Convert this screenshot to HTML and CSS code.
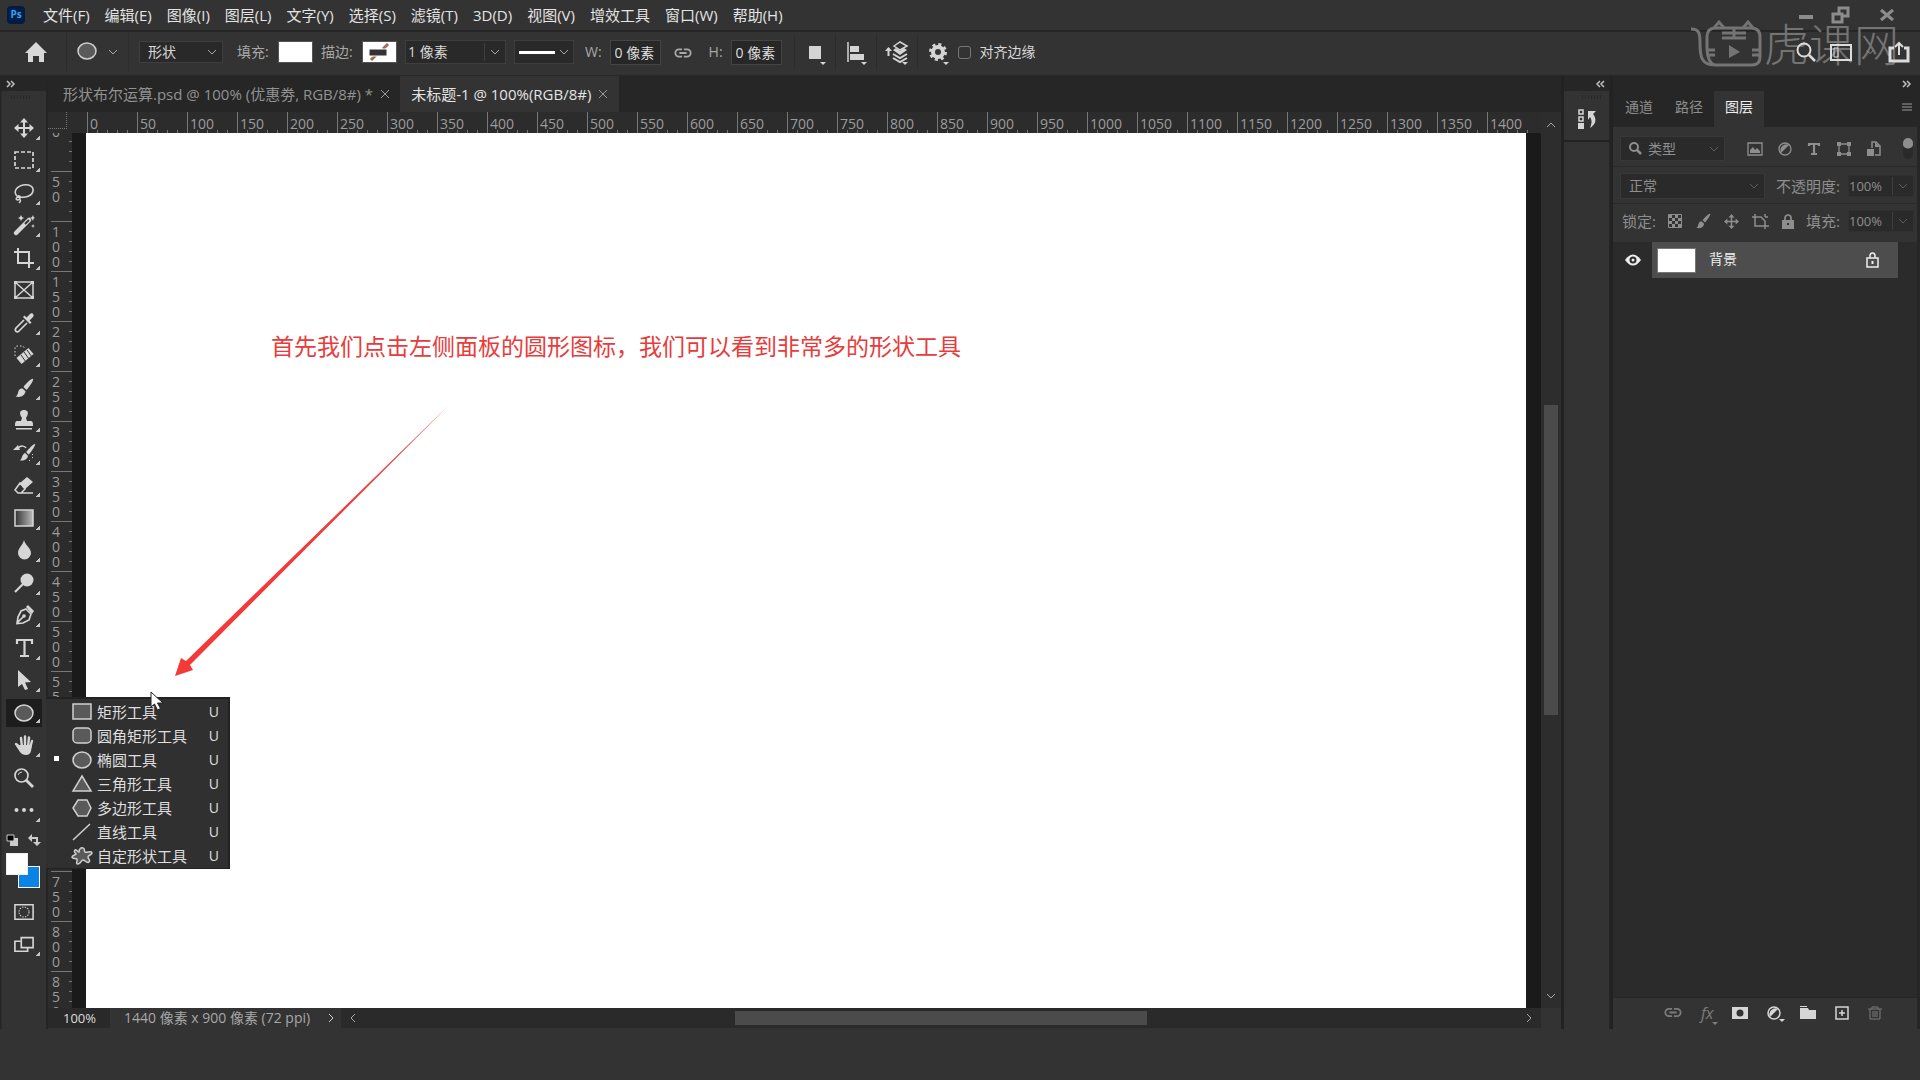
FILE: index.html
```html
<!DOCTYPE html>
<html lang="zh-CN">
<head>
<meta charset="utf-8">
<meta name="viewport" content="width=device-width, initial-scale=1">
<title>未标题-1</title>
<link rel="stylesheet" href="styles.css">
</head>
<body>
<svg class="sprite" aria-hidden="true">
  <symbol id="down" viewBox="0 0 10 6"><path d="M1 1l4 4 4-4" fill="none" stroke="currentColor"/></symbol>
  <symbol id="dbl-right" viewBox="0 0 10 8"><path d="M1 1l3 3-3 3M5 1l3 3-3 3" fill="none" stroke="currentColor" stroke-width="1.5"/></symbol>
  <symbol id="cross" viewBox="0 0 10 10"><path d="M1 1l8 8M9 1l-8 8" fill="none" stroke="currentColor"/></symbol>
  <symbol id="move" viewBox="0 0 20 20"><path d="M10 0l4 4.500h-3V9h4.500V6L20 10l-4.500 4v-3H11v4.500h3L10 20l-4-4.500h3V11H4.500v3L0 10l4.500-4v3H9V4.500H6z" fill="currentColor"/></symbol>
  <symbol id="brush" viewBox="0 0 20 20"><path d="M19 1c-1-1-6 3.500-9.500 8l3 3C16 8 20 2 19 1zM8.500 10.500l3 2.800c-.5 4-4.500 6.700-10 5.200 3-1 2-5 4-7 1-1 2-1.200 3-1z" fill="currentColor"/></symbol>
  <symbol id="link" viewBox="0 0 20 12"><path d="M9 2H5.500a4 4 0 0 0 0 8H9M11 2h3.500a4 4 0 0 1 0 8H11M6 6h8" fill="none" stroke="currentColor" stroke-width="2"/></symbol>
</svg>

<header class="menubar">
  <span class="logo">Ps</span>
  <nav class="menus">
    <button>文件(F)</button><button>编辑(E)</button><button>图像(I)</button><button>图层(L)</button><button>文字(Y)</button><button>选择(S)</button><button>滤镜(T)</button><button>3D(D)</button><button>视图(V)</button><button>增效工具</button><button>窗口(W)</button><button>帮助(H)</button>
  </nav>
  <div class="window-buttons">
    <button aria-label="最小化"><svg width="14" height="18"><path d="M0 11h14" stroke="currentColor" stroke-width="4"/></svg></button>
    <button aria-label="还原"><svg width="20" height="18"><path d="M2 8h9v8H2zM8 7V2h9v8h-6" fill="none" stroke="currentColor" stroke-width="3"/></svg></button>
    <button aria-label="关闭"><svg width="14" height="18"><path d="M1 4l12 10M13 4L1 14" stroke="currentColor" stroke-width="3"/></svg></button>
  </div>
</header>

<section class="options" aria-label="工具选项">
  <button class="home" aria-label="主页"><svg width="22" height="20"><path d="M11 0l11 11h-3v9h-5v-6H8v6H3v-9H0z" fill="currentColor"/></svg></button>
  <button class="preset" aria-label="工具预设"><svg width="20" height="20"><ellipse cx="10" cy="9" rx="9" ry="8" fill="#5a5a5a" stroke="#cfcfcf" stroke-width="1.500"/></svg><svg class="chev"><use href="#down"/></svg></button>
  <span class="drop mode"><select aria-label="模式"><option>形状</option></select><svg class="chev"><use href="#down"/></svg></span>
  <span class="caption fill">填充:</span>
  <button class="swatch" aria-label="填充颜色"></button>
  <span class="caption">描边:</span>
  <button class="swatch" aria-label="描边颜色"><svg width="32" height="20"><path d="M8 18L13 13M20 7L25 2" stroke="#a5695c" stroke-width="3"/><path d="M6 7h18v7H6z" fill="#333" stroke="#fff"/></svg></button>
  <span class="drop stroke"><input aria-label="描边宽度" value="1 像素"><svg class="chev"><use href="#down"/></svg></span>
  <button class="line-type" aria-label="描边类型"><i></i><svg class="chev"><use href="#down"/></svg></button>
  <label class="size wide">W: <input value="0 像素"></label>
  <svg class="chain"><use href="#link"/></svg>
  <label class="size">H: <input value="0 像素"></label>
  <div class="actions">
    <button class="has-menu" aria-label="路径操作"><svg width="14" height="14"><path d="M1 1h12v13H1z" fill="currentColor"/></svg></button>
    <button class="has-menu" aria-label="路径对齐"><svg width="18" height="20"><path d="M1 0v20" stroke="currentColor" stroke-width="1.500"/><path d="M3 4h9v6H3zM3 12h14v6H3z" fill="currentColor"/></svg></button>
    <button class="has-menu" aria-label="路径排列"><svg width="24" height="22"><path d="M3.500 15V7" stroke="currentColor" stroke-width="2"/><path d="M0 10l3.500-4L7 10z" fill="currentColor"/><path d="M9 5l6-4 7 4-7 4z" fill="none" stroke="currentColor" stroke-width="1.500"/><path d="M8 9l3-2 4 3 4-3 3 2-7 5z" fill="currentColor"/><path d="M8 13l7 4 7-4M8 17l7 4 7-4" fill="none" stroke="currentColor" stroke-width="2"/></svg></button>
    <button class="has-menu" aria-label="设置"><svg width="18" height="18"><circle cx="9" cy="9" r="5" fill="none" stroke="currentColor" stroke-width="4"/><circle cx="9" cy="9" r="7.500" fill="none" stroke="currentColor" stroke-width="3" stroke-dasharray="3 2.900"/></svg></button>
  </div>
  <label class="check"><input type="checkbox">对齐边缘</label>
  <div class="app-actions">
    <button aria-label="搜索"><svg width="20" height="20"><circle cx="8" cy="8" r="6.500" fill="none" stroke="currentColor" stroke-width="2"/><path d="M13 13l6 6" stroke="currentColor" stroke-width="2.500"/></svg></button>
    <button aria-label="工作区"><svg width="22" height="18"><path d="M1 2h20v15H1z" fill="none" stroke="currentColor" stroke-width="2"/><path d="M4 5h4v9H4z" fill="none" stroke="currentColor"/></svg></button>
    <svg class="chev small"><use href="#down"/></svg>
    <button aria-label="共享"><svg width="22" height="22"><path d="M6 7H2v13h18V7h-4" fill="none" stroke="currentColor" stroke-width="3"/><path d="M11 14V3M7 6l4-4 4 4" fill="none" stroke="currentColor" stroke-width="2"/></svg></button>
  </div>
</section>

<div class="watermark">
  <svg width="70" height="48" fill="none" stroke="currentColor" stroke-width="3"><path d="M0 9c8 0 9 4 9 14 0 13 1 22 15 22h37q8 0 8-8V17q0-9-9-9H24q-8 0-8 9v11c0 9 3 17 9 17"/><path d="M23 8l5-6 5 6M52 8l5-6 5 6M31 13h24M34 18h18M31 18h24M43 8v10M16 30h8M16 35h8M61 30h8M61 35h8"/><path d="M38 25l11 7-11 6z" fill="currentColor" stroke="none"/></svg><span>虎课网</span>
</div>

<main class="workspace">
  <aside class="toolbox">
    <div class="collapse"><svg width="10" height="8"><use href="#dbl-right"/></svg></div>
    <div class="toolpanel">
      <div class="grip"></div>
      <div class="tools">
        <button class="tool" aria-label="移动"><svg><use href="#move"/></svg></button>
        <button class="tool" aria-label="选框"><svg viewBox="0 0 20 20"><path d="M1 2h18v16H1z" fill="none" stroke="currentColor" stroke-width="1.700" stroke-dasharray="4 2"/></svg></button>
        <button class="tool" aria-label="套索"><svg viewBox="0 0 20 20"><path d="M4 14C-1 10 1 4 9 2c7-1 11 2 10 6-1 5-7 7-14 6-3 0-4 3-1 3 3-1 3-5 0-4M5 16c2 1 2 2 0 4" fill="none" stroke="currentColor" stroke-width="1.500"/></svg></button>
        <button class="tool" aria-label="魔棒"><svg viewBox="0 0 20 20"><path d="M2 18L15 5" stroke="currentColor" stroke-width="4.500" stroke-linecap="round"/><path d="M11 9l4-4" stroke="#333" stroke-width="2"/><path d="M7 0l1 2 2 1-2 1-1 2-1-2-2-1 2-1zM19 0l.6 2L21 3l-1.400.6L19 6l-1-2-2-1 2-1zM19 9l.6 1.400L21 11l-1.400.6L19 13l-.6-1.400L17 11l1.400-.6z" fill="currentColor"/></svg></button>
        <button class="tool" aria-label="裁剪"><svg viewBox="0 0 20 20"><path d="M4 0v15h16M0 4h15v16" fill="none" stroke="currentColor" stroke-width="2"/></svg></button>
        <button class="tool plain" aria-label="图框"><svg viewBox="0 0 20 20"><path d="M1 2h18v16H1zM1 2l18 16M19 2L1 18" fill="none" stroke="currentColor" stroke-width="1.500"/><path d="M0 1h3v3H0zM17 1h3v3h-3zM0 16h3v3H0zM17 16h3v3h-3z" fill="currentColor"/></svg></button>
        <button class="tool" aria-label="吸管"><svg viewBox="0 0 20 20"><path d="M10 7L2 15c-2 3 1 5 3 3l8-8" fill="none" stroke="currentColor" stroke-width="1.700"/><path d="M9 4l7 7 1.500-1.500-2-2L19 4c2-2-1-5-3-3l-3.500 3.500-2-2z" fill="currentColor"/></svg></button>
        <button class="tool" aria-label="修复"><svg viewBox="0 0 20 20"><path d="M5 16L17 6" stroke="currentColor" stroke-width="8"/><path d="M7 10l5 7M10 7l5 7M13 5l5 7" stroke="#333"/><path d="M1 11V3q0-2 3-2h5l2 3" fill="none" stroke="currentColor" stroke-dasharray="1.500 2"/></svg></button>
        <button class="tool" aria-label="画笔"><svg><use href="#brush"/></svg></button>
        <button class="tool" aria-label="图章"><svg viewBox="0 0 20 20"><path d="M7 11l1-3C4 2 7 0 10 0s6 2 2 8l1 3h4q2 0 2 4v1H1v-1q0-4 2-4zM2 18h16v1.500H2z" fill="currentColor"/></svg></button>
        <button class="tool" aria-label="历史画笔"><svg viewBox="0 0 20 20"><g transform="translate(4 1) scale(.9)"><path d="M19 0c-1-1-7 5-10 9l3 3c3-4 8-11 7-12zM8 10l3 3c0 4-5 6-9 5 3-1 2-7 6-8z" fill="currentColor"/></g><path d="M4 5c3-3 7-2 8 0" fill="none" stroke="currentColor" stroke-width="1.500"/><path d="M-1 7l5-5 2 5zM18 11h1v1h-1zM18 14h1v1h-1zM15 17h1v1h-1z" fill="currentColor"/></svg></button>
        <button class="tool" aria-label="橡皮擦"><svg viewBox="0 0 20 20"><path d="M6 8l7-6 6 5-8 7z" fill="currentColor"/><path d="M6 8l5 6-4 4H4l-3-3zM5 18h14" fill="none" stroke="currentColor" stroke-width="1.500"/></svg></button>
        <button class="tool" aria-label="渐变"><svg viewBox="0 0 20 20"><defs><linearGradient id="ramp"><stop stop-color="#333"/><stop offset="1" stop-color="#bbb"/></linearGradient></defs><path d="M1 2h18v16H1z" fill="url(#ramp)" stroke="currentColor" stroke-width="1.500"/></svg></button>
        <button class="tool" aria-label="模糊"><svg viewBox="0 0 20 20"><path d="M10 0c1 5 7 8 7 13a6.500 6.500 0 0 1-13 0C4 8 9 5 10 0z" fill="currentColor"/></svg></button>
        <button class="tool" aria-label="减淡"><svg viewBox="0 0 20 20"><circle cx="13" cy="7" r="6.500" fill="currentColor"/><path d="M9 11l-8 8" stroke="currentColor" stroke-width="2.200"/></svg></button>
        <button class="tool" aria-label="钢笔"><svg viewBox="0 0 20 20"><path d="M12 4l5 5-2 6-6 3-6 .500L4 12l3-6zM3 18l7-7" fill="none" stroke="currentColor" stroke-width="1.700"/><path d="M12 2l2-2 6 6-2 3z" fill="currentColor"/><circle cx="10" cy="11" r="1.800" fill="currentColor"/></svg></button>
        <button class="tool" aria-label="文字"><svg viewBox="0 0 20 20"><path d="M3 6V2h15v4M10.500 2v16M6 18h9" fill="none" stroke="currentColor" stroke-width="2.200"/></svg></button>
        <button class="tool" aria-label="路径选择"><svg viewBox="0 0 20 20"><path d="M4 0l13 12-6 .500 3 6.500-3 1-3-6-4 3z" fill="currentColor"/></svg></button>
        <button class="tool active" aria-label="椭圆"><svg viewBox="0 0 20 20"><ellipse cx="10" cy="10" rx="9" ry="8" fill="#5a5a5a" stroke="currentColor" stroke-width="1.500"/></svg></button>
        <button class="tool" aria-label="抓手"><svg viewBox="0 0 20 20"><path d="M2 9l5 4M8 12L7 3M11 11V1.500M14 12l1-9.500M16 13l2-7" stroke="currentColor" stroke-width="2.400" stroke-linecap="round"/><path d="M6 10h12l-1 6q-1 4-5 4T6 17L2 11z" fill="currentColor"/></svg></button>
        <button class="tool plain" aria-label="缩放"><svg viewBox="0 0 20 20"><circle cx="7.500" cy="7.500" r="6.500" fill="none" stroke="currentColor" stroke-width="1.700"/><path d="M12 12l7 7" stroke="currentColor" stroke-width="2.800"/><path d="M4 7q1-3 4-3" fill="none" stroke="currentColor"/></svg></button>
        <button class="tool" aria-label="更多"><svg viewBox="0 0 20 20"><circle cx="2.500" cy="10" r="2" fill="currentColor"/><circle cx="10" cy="10" r="2" fill="currentColor"/><circle cx="17.500" cy="10" r="2" fill="currentColor"/></svg></button>
      </div>
      <div class="color-mini">
        <svg width="12" height="12"><path d="M4 4h8v8H4z" fill="#ccc"/><path d="M1 1h7v6H1z" fill="#000" stroke="#ccc"/></svg>
        <svg width="12" height="12"><path d="M3 4h6v5" fill="none" stroke="#ccc" stroke-width="2"/><path d="M0 4l4-4v8zM9 12L5 8h8z" fill="#ccc"/></svg>
      </div>
      <div class="colors"><button class="back" aria-label="背景色"></button><button class="front" aria-label="前景色"></button></div>
      <button class="tool plain" aria-label="快速蒙版"><svg viewBox="0 0 22 18"><path d="M1 1h20v16H1z" fill="none" stroke="currentColor" stroke-width="1.700"/><circle cx="11" cy="9" r="5.500" fill="none" stroke="currentColor" stroke-width="1.200" stroke-dasharray="1.500 1.400"/></svg></button>
      <button class="tool" aria-label="屏幕模式"><svg viewBox="0 0 22 18"><path d="M7 6H1v11h14v-4M8 2h13v11H8z" fill="none" stroke="currentColor" stroke-width="1.800"/></svg></button>
    </div>
    <div class="flyout" role="menu">
      <button role="menuitem"><svg><path d="M1 2h18v15H1z"/></svg>矩形工具<kbd>U</kbd></button>
      <button role="menuitem"><svg><rect x="1" y="2" width="18" height="15" rx="4"/></svg>圆角矩形工具<kbd>U</kbd></button>
      <button role="menuitem" class="current"><svg><ellipse cx="10" cy="10" rx="9" ry="8"/></svg>椭圆工具<kbd>U</kbd></button>
      <button role="menuitem"><svg><path d="M10 2l9 15H1z"/></svg>三角形工具<kbd>U</kbd></button>
      <button role="menuitem"><svg><path d="M6 2h9l4 8-4 8H6l-5-8z"/></svg>多边形工具<kbd>U</kbd></button>
      <button role="menuitem"><svg><path d="M1 18L18 2"/></svg>直线工具<kbd>U</kbd></button>
      <button role="menuitem"><svg><path d="M7 6c0-3 2-5 4-4 2 0 1 3 2 4 2 1 7-2 7 1 0 2-4 2-4 4s3 3 1 5-4-2-6-2-2 4-5 4 0-4-1-5-5 0-5-2 4-2 4-3-3-2-1-4c1-1 3 2 4 2z"/></svg>自定形状工具<kbd>U</kbd></button>
    </div>
    <svg class="pointer" width="14" height="20"><path d="M1 1v15l3.500-3 3 6 3-1.500-3-5.500H13z" fill="#fff" stroke="#222"/></svg>
  </aside>

  <section class="document">
    <div class="tabs">
      <div class="tab"><a href="#psd">形状布尔运算.psd @ 100% (优惠劵, RGB/8#) *</a><button aria-label="关闭"><svg width="10" height="10"><use href="#cross"/></svg></button></div>
      <div class="tab selected"><a href="#canvas">未标题-1 @ 100%(RGB/8#)</a><button aria-label="关闭"><svg width="10" height="10"><use href="#cross"/></svg></button></div>
    </div>
    <div class="view">
      <div class="ruler-x">
        <i class="origin"></i>
        <div class="marks-x"><span>0</span><span>50</span><span>100</span><span>150</span><span>200</span><span>250</span><span>300</span><span>350</span><span>400</span><span>450</span><span>500</span><span>550</span><span>600</span><span>650</span><span>700</span><span>750</span><span>800</span><span>850</span><span>900</span><span>950</span><span>1000</span><span>1050</span><span>1100</span><span>1150</span><span>1200</span><span>1250</span><span>1300</span><span>1350</span><span>1400</span></div>
      </div>
      <div class="scroll-y"><svg class="chev up"><use href="#down"/></svg><div class="track"><i></i></div><svg class="chev"><use href="#down"/></svg></div>
      <div class="ruler-y"><div class="marks-y"><span>0</span><span>50</span><span>100</span><span>150</span><span>200</span><span>250</span><span>300</span><span>350</span><span>400</span><span>450</span><span>500</span><span>550</span><span>600</span><span>650</span><span>700</span><span>750</span><span>800</span><span>850</span></div></div>
      <div class="pasteboard">
        <div class="canvas" id="canvas">
          <p class="note">首先我们点击左侧面板的圆形图标，我们可以看到非常多的形状工具</p>
          <svg class="arrow" width="274" height="272"><path d="M0 271l6-18 5 3L273 1 15 260l3 5z" fill="#f33a38"/></svg>
        </div>
      </div>
    </div>
    <div class="status">
      <input class="zoom" aria-label="缩放比例" value="100%">
      <span class="info">1440 像素 x 900 像素 (72 ppi)</span>
      <svg class="chev right bright"><use href="#down"/></svg>
      <div class="scroll-x"><svg class="chev left"><use href="#down"/></svg><div class="track"><i></i></div><svg class="chev right"><use href="#down"/></svg></div>
    </div>
  </section>

  <aside class="strip">
    <div class="collapse end"><svg class="flip" width="10" height="8"><use href="#dbl-right"/></svg></div>
    <div class="strip-cell"><div class="grip"></div><button aria-label="历史记录"><svg width="20" height="22"><path d="M2 2h4v4H2zM2 9h4v4H2z" fill="none" stroke="currentColor" stroke-width="1.500"/><path d="M1 15h6v6H1z" fill="currentColor"/><path d="M11 3h8l-3 3c4 5 3 10-3 14 2-5 2-8 0-11l-2 3z" fill="currentColor"/></svg></button></div>
    <div class="strip-rest"></div>
  </aside>

  <aside class="panels">
    <div class="collapse end"><svg width="10" height="8"><use href="#dbl-right"/></svg></div>
    <div class="panel-tabs"><button>通道</button><button>路径</button><button class="selected">图层</button><svg class="burger" width="10" height="10"><path d="M0 1h10M0 4h10M0 7h10" stroke="currentColor" stroke-width="1"/></svg></div>
    <div class="row filter">
      <span class="drop kind"><svg width="13" height="13"><circle cx="5" cy="5" r="4" fill="none" stroke="currentColor" stroke-width="2"/><path d="M8 8l4 4" stroke="currentColor" stroke-width="2.500"/></svg><select aria-label="筛选"><option>类型</option></select><svg class="chev"><use href="#down"/></svg></span>
      <div class="filter-icons">
        <svg width="16" height="14"><path d="M1 1h14v12H1z" fill="none" stroke="currentColor" stroke-width="1.300"/><path d="M3 11V8l3-3 2 3 2-2 3 3v2z" fill="currentColor"/></svg>
        <svg width="14" height="14"><circle cx="7" cy="7" r="6" fill="none" stroke="currentColor" stroke-width="1.300"/><path d="M3 11a6 6 0 0 1 8-8z" fill="currentColor"/></svg>
        <svg width="14" height="14"><path d="M2 4V2h10v2M7 2v10M4 12h6" fill="none" stroke="currentColor" stroke-width="2.200"/></svg>
        <svg width="16" height="14"><path d="M3 2h10v10H3z" fill="none" stroke="currentColor" stroke-width="1.300"/><path d="M1 0h4v4H1zM11 0h4v4h-4zM1 10h4v4H1zM11 10h4v4h-4z" fill="currentColor"/></svg>
        <svg width="14" height="16"><path d="M5 7V1h4l4 4v9H8" fill="none" stroke="currentColor" stroke-width="1.500"/><path d="M8 1v5h5M0 8h7v7H0z" fill="currentColor"/></svg>
      </div>
      <i class="toggle"></i>
    </div>
    <div class="row blend">
      <span class="drop mode-blend"><select aria-label="混合模式"><option>正常</option></select><svg class="chev"><use href="#down"/></svg></span>
      <label for="opacity">不透明度:</label>
      <span class="drop percent"><input id="opacity" value="100%"><svg class="chev"><use href="#down"/></svg></span>
    </div>
    <div class="row locks">
      <span class="lock-label">锁定:</span>
      <div class="lock-icons">
        <svg width="14" height="14"><path d="M.5.5h13v13H.5z" fill="none" stroke="currentColor"/><path d="M1 1h3v3H1zM7 1h3v3H7zM4 4h3v3H4zM10 4h3v3h-3zM1 7h3v3H1zM7 7h3v3H7zM4 10h3v3H4zM10 10h3v3h-3z" fill="currentColor"/></svg>
        <svg width="16" height="16"><use href="#brush"/></svg>
        <svg width="15" height="15"><use href="#move"/></svg>
        <svg width="17" height="15"><path d="M0 3h9l4 4v8M3 0v12h14M13 3V0M13 3h3" fill="none" stroke="currentColor" stroke-width="1.500"/></svg>
        <svg width="12" height="15"><path d="M0 6h12v9H0z" fill="currentColor"/><path d="M3 6V4a3 3 0 0 1 6 0v2" fill="none" stroke="currentColor" stroke-width="1.700"/><path d="M5 9h2v2H5z" fill="#333"/></svg>
      </div>
      <label for="fill-pct">填充:</label>
      <span class="drop percent"><input id="fill-pct" value="100%"><svg class="chev"><use href="#down"/></svg></span>
    </div>
    <div class="layers">
      <div class="layer">
        <button class="eye" aria-label="可见性"><svg width="16" height="12"><path d="M0 6q8-11 16 0-8 11-16 0z" fill="currentColor"/><circle cx="8" cy="6" r="3.500" fill="#2b2b2b"/><circle cx="8" cy="6" r="1.500" fill="currentColor"/></svg></button>
        <div class="layer-body"><i class="thumb"></i><span>背景</span><svg width="14" height="16"><path d="M1 6h11v9H1zM4 6V4q0-3 2.500-3T9 4v2" fill="none" stroke="currentColor" stroke-width="1.500"/><path d="M5.500 9h2v3h-2z" fill="currentColor"/></svg></div>
      </div>
    </div>
    <div class="panel-foot">
      <button class="dim" aria-label="链接图层"><svg width="18" height="11"><use href="#link"/></svg></button>
      <button class="dim fx has-menu" aria-label="图层样式">fx</button>
      <button aria-label="蒙版"><svg width="16" height="12"><path d="M0 0h16v12H0z" fill="currentColor"/><circle cx="8" cy="6" r="3.500" fill="#333"/></svg></button>
      <button class="has-menu" aria-label="调整图层"><svg width="14" height="14"><circle cx="7" cy="7" r="6" fill="none" stroke="currentColor" stroke-width="1.500"/><path d="M3 11a6 6 0 0 1 8-8z" fill="currentColor"/></svg></button>
      <button aria-label="新建组"><svg width="16" height="14"><path d="M0 0h7v1H0zM0 2h8l1 2h7v9H0z" fill="currentColor"/></svg></button>
      <button aria-label="新建图层"><svg width="14" height="14"><path d="M1 1h12v12H1zM4 7h6M7 4v6" fill="none" stroke="currentColor" stroke-width="1.500"/></svg></button>
      <button class="dim" aria-label="删除"><svg width="14" height="14"><path d="M0 3h14M4 3V1h6v2M2 3v10h10V3M5 5v6M7 5v6M9 5v6" fill="none" stroke="currentColor"/></svg></button>
    </div>
  </aside>
</main>
<footer class="base"></footer>
</body>
</html>
```
FILE: styles.css
```css
* { box-sizing: border-box; }
body {
  margin: 0;
  height: 100vh;
  display: flex;
  flex-direction: column;
  overflow: hidden;
  background: #333;
  color: #d8d8d8;
  font: 15px/20px "Open Sans", "Noto Sans CJK SC", sans-serif;
}
button, input, select {
  font: inherit;
  color: inherit;
  background: none;
  border: 0;
  border-radius: 0;
  padding: 0;
  margin: 0;
  appearance: none;
  outline: 0;
}
svg { display: block; flex: none; overflow: visible; }
a { color: inherit; text-decoration: none; }
.sprite { position: absolute; width: 0; height: 0; }
.chev { width: 10px; height: 6px; color: #a8a8a8; }
.up { transform: rotate(180deg); }
.right { transform: rotate(-90deg); }
.left { transform: rotate(90deg); }
.flip { transform: scaleX(-1); }

/* Menu bar */
.menubar { display: flex; align-items: center; height: 30px; padding: 0 26px 0 7px; }
.logo {
  width: 18px; height: 18px; border-radius: 4px;
  background: #001e45; color: #36a3f7;
  font-size: 10px; line-height: 17px; font-weight: 700; text-align: center;
}
.menus { display: flex; gap: 15px; padding-left: 18px; padding-bottom: 1px; font-size: 15px; color: #e4e4e4; white-space: nowrap; }
.window-buttons { display: flex; gap: 18px; margin-left: auto; color: #8c8c8c; }
.window-buttons button:last-child { margin-left: 11px; }

/* Options bar */
.options {
  display: flex; align-items: center; height: 46px; padding: 0 10px 3px 24px;
  border-top: 2px solid #262626; border-bottom: 1px solid #282828; font-size: 14px;
}
.options > * { flex: none; }
.drop { display: flex; align-items: center; background: #292929; border: 1px solid #3e3e3e; padding-right: 5px; }
.drop select, .drop input { flex: 1; min-width: 0; width: 0; }
.home { margin-right: 19px; margin-left: 1px; }
.preset { display: flex; align-items: center; gap: 11px; padding: 0 10px; height: 38px; border: solid #2c2c2c; border-width: 0 1px; }
.mode { width: 84px; height: 22px; padding-left: 8px; margin-left: 10px; }
.caption { color: #a8a8a8; width: 41px; }
.fill { margin-left: 14px; }
.swatch { width: 35px; height: 22px; background: #fff; border: 1px solid #555; margin-right: 8px; }
.stroke { width: 101px; height: 24px; padding-left: 2px; }
.stroke .chev, .percent .chev { box-sizing: content-box; padding-left: 5px; border-left: 1px solid #3e3e3e; padding-top: 6px; padding-bottom: 6px; }
.line-type { display: flex; align-items: center; justify-content: space-between; width: 60px; height: 24px; margin-left: 8px; padding: 0 4px; background: #292929; border: 1px solid #3e3e3e; }
.line-type i { width: 36px; height: 3px; background: #fff; }
.size { display: flex; align-items: center; gap: 8px; color: #a8a8a8; }
.wide { margin-left: 11px; }
.size input { width: 51px; height: 25px; padding-left: 4px; background: #272727; border: 1px solid #444; color: #dedede; }
.chain { width: 18px; height: 12px; margin: 2px 17px 0 13px; color: #a8a8a8; }
.actions { display: flex; margin-left: 12px; color: #d4d4d4; }
.actions button { display: grid; place-items: center; width: 41px; height: 36px; border-left: 1px solid #2c2c2c; }
.has-menu { position: relative; }
.actions .has-menu::after, .panel-foot .has-menu::after {
  content: ""; position: absolute; right: 9px; bottom: 5px;
  border: solid transparent; border-top-color: currentColor; border-width: 3px 3px 0;
}
.check { display: flex; align-items: center; gap: 9px; }
.check input { width: 13px; height: 13px; border: 1px solid #777; border-radius: 3px; }
.app-actions { position: relative; z-index: 2; display: flex; align-items: center; gap: 14px; margin-left: auto; color: #dcdcdc; }
.small { width: 8px; }
.watermark { position: absolute; z-index: 1; top: 20px; right: 21px; display: flex; gap: 3px; color: #747474; }
.watermark span { font: 300 45px/46px "Noto Sans CJK SC", sans-serif; }

/* Workspace */
.workspace { flex: 1; display: flex; min-height: 0; background: #262626; }
.collapse { display: flex; align-items: center; height: 15px; padding: 0 5px; color: #c0c0c0; }
.end { justify-content: flex-end; }
.base { height: 51px; }

.toolbox { position: relative; z-index: 2; display: flex; flex-direction: column; width: 48px; border-right: 1px solid #242424; padding-left: 1px; padding-right: 1px; }
.toolpanel { flex: 1; background: #333; border-left: 1px solid #2b2b2b; }
.grip { width: 20px; height: 4px; margin: 4px 0 13px 9px; background: repeating-linear-gradient(90deg, #292929 0 1px, #333 1px 3px); }
.tools { display: grid; grid-auto-rows: 32px 33px; }
.tool { position: relative; display: grid; place-items: center; width: 36px; height: 32px; margin-left: 4px; color: #d6d6d6; }
.tool svg { width: 20px; height: 20px; }
.tool::after { content: ""; position: absolute; right: 2px; bottom: 4px; width: 4px; height: 4px; background: linear-gradient(135deg, transparent 50%, #c4c4c4 50%); }
.plain::after { display: none; }
.active { background: #1d1d1d; height: 28px; margin-top: 2px; }
.color-mini { display: flex; gap: 10px; height: 22px; padding: 7px 0 0 4px; }
.colors { display: grid; height: 47px; padding: 4px 0 0 4px; }
.colors button { grid-area: 1 / 1; width: 22px; height: 22px; }
.colors .back { margin: 13px 0 0 12px; background: #0a82e6; border: 1px solid #fff; }
.colors .front { background: #fff; border: 1px solid #eee; z-index: 1; }

.flyout { position: absolute; left: 46px; top: 621px; width: 184px; padding: 1px 9px 0 8px; background: #303030; border: solid #222; border-width: 2px 2px 1px 0; }
.flyout button { position: relative; display: flex; align-items: center; gap: 5px; width: 100%; height: 24px; padding-left: 18px; font: 15px/24px "Open Sans", "Noto Sans CJK SC", sans-serif; color: #dedede; }
.flyout svg { width: 20px; height: 20px; fill: #5a5a5a; stroke: #cfcfcf; stroke-width: 1.5; }
.flyout kbd { margin-left: auto; font: 14px/24px "Open Sans", sans-serif; }
.current::before { content: ""; position: absolute; left: 0; top: 8px; width: 5px; height: 5px; background: #fff; }
.pointer { position: absolute; left: 150px; top: 615px; }

/* Document */
.document { flex: 1; min-width: 0; display: flex; flex-direction: column; }
.tabs { display: flex; height: 36px; font-size: 15px; color: #929292; white-space: nowrap; }
.tab { display: flex; align-items: center; gap: 7px; padding: 0 10px 1px 15px; }
.tab.selected { background: #333; color: #e4e4e4; padding: 0 11px 1px 11px; }
.tab button { color: #999; }
.view { flex: 1; min-height: 0; display: grid; grid-template: 21px 1fr / 24px minmax(0, 1fr) 20px; background: #2c2c2c; }
.ruler-x { grid-column: 1 / 3; display: flex; overflow: hidden; color: #9c9c9c; font-size: 14px; }
.origin { flex: none; width: 19px; margin-right: 20px; border-right: 1px dotted #777; border-bottom: 1px dotted #777; height: 17px; }
.marks-x { display: flex; background: repeating-linear-gradient(90deg, #777 0 1px, transparent 1px 10px) 0 100% / 100% 3px no-repeat; }
.marks-x span { width: 50px; flex: none; padding-left: 2px; border-left: 1px solid #777; line-height: 24px; }
.scroll-y { grid-area: 1 / 3 / 3 / 4; display: flex; flex-direction: column; align-items: center; padding: 10px 0 9px; background: #2d2d2d; }
.scroll-y .track { flex: 1; padding-top: 277px; }
.scroll-y i { display: block; width: 14px; height: 310px; background: #4b4b4b; }
.ruler-y { overflow: hidden; color: #9c9c9c; font-size: 14px; padding-left: 3px; }
.marks-y { margin-top: -12px; background: repeating-linear-gradient(#777 0 1px, transparent 1px 10px) 100% 0 / 3px 100% no-repeat; }
.marks-y span { display: block; height: 50px; padding: 2px 10px 0 1px; border-top: 1px solid #777; line-height: 15px; word-break: break-all; }
.pasteboard { min-height: 0; padding: 0 15px 0 14px; background: #1a1a1a; }
.canvas { position: relative; height: 100%; background: #fff; overflow: hidden; }
.note { position: absolute; left: 185px; top: 195px; margin: 0; font: 23px/34px "Noto Sans CJK SC", sans-serif; color: #e73c3c; white-space: nowrap; }
.arrow { position: absolute; left: 89px; top: 272px; }
.status { display: flex; align-items: center; height: 21px; padding-bottom: 1px; background: #333; color: #a8a8a8; font-size: 14px; }
.zoom { width: 62px; height: 100%; padding-left: 15px; background: #292929; color: #dedede; font-size: 13px; }
.info { width: 216px; padding-left: 14px; white-space: nowrap; }
.bright { color: #ccc; }
.scroll-x { flex: 1; align-self: stretch; display: flex; align-items: center; margin-left: 5px; margin-right: 20px; padding: 0 7px; background: #2a2a2a; }
.scroll-x .track { flex: 1; padding-left: calc(32% - 3px); }
.scroll-x i { display: block; width: 412px; height: 14px; background: #4b4b4b; }

/* Docked panels */
.strip { width: 49px; display: flex; flex-direction: column; border-left: 3px solid #222; }
.strip-cell { height: 51px; margin-right: 1px; background: #333; border-bottom: 2px solid #222; overflow: hidden; }
.strip-cell .grip { margin: 4px 0 9px 18px; }
.strip-cell button { margin-left: 13px; color: #d6d6d6; }
.strip-rest { flex: 1; margin-right: 1px; background: #333; }
.panels { width: 310px; display: flex; flex-direction: column; padding-right: 3px; border-left: 3px solid #222; color: #8e8e8e; font-size: 14px; }
.panel-tabs { display: flex; height: 36px; padding: 0 5px 0 1px; }
.panel-tabs button { width: 50px; padding-bottom: 4px; }
.panel-tabs .selected { background: #333; color: #eee; }
.burger { margin: 12px 0 0 auto; color: #999; }
.row { display: flex; align-items: center; background: #333; padding-left: 7px; }
.filter { height: 40px; padding-top: 4px; border-bottom: 1px solid #2a2a2a; }
.kind { width: 105px; height: 25px; gap: 6px; padding-left: 8px; }
.drop.kind, .drop.mode-blend { background: #2a2a2a; border-color: #383838; }
.row .chev { color: #5c5c5c; }
.filter-icons { display: flex; align-items: center; gap: 15px; padding-left: 22px; }
.toggle { width: 10px; height: 21px; margin-left: auto; margin-right: 4px; border-radius: 5px; background: radial-gradient(circle at 5px 5px, #8e8e8e 5px, #2a2a2a 6px); }
.blend { height: 37px; padding-top: 2px; border-bottom: 1px solid #2a2a2a; }
.mode-blend { width: 145px; height: 26px; padding-left: 8px; margin-right: 10px; }
.row label, .lock-label { font-size: 15px; }
.row label { margin-left: auto; margin-right: 8px; }
.percent { width: 66px; height: 22px; margin-right: 3px; background: #2a2a2a; border-color: #303030; font-size: 13px; }
.locks { height: 38px; padding-left: 9px; padding-bottom: 4px; }
.lock-icons { display: flex; align-items: center; gap: 13px; padding-left: 12px; }
.layers { flex: 1; background: #2b2b2b; color: #eee; }
.layer { display: flex; align-items: center; height: 36px; padding-right: 19px; }
.eye { width: 39px; padding-left: 12px; }
.layer-body { flex: 1; display: flex; align-items: center; height: 100%; padding: 0 18px 0 5px; background: #4d4d4d; }
.thumb { width: 39px; height: 25px; background: #fff; border: 1px solid #777; }
.layer-body span { margin-left: 13px; margin-right: auto; padding-bottom: 2px; }
.panel-foot { display: flex; align-items: center; justify-content: space-between; height: 32px; padding: 0 35px 2px 51px; background: #333; border-top: 1px solid #262626; color: #d6d6d6; }
.panel-foot .has-menu::after { right: -4px; bottom: -2px; }
.dim { color: #7c7c7c; }
.fx { font: italic 16px/20px "Open Sans", sans-serif; }
```
